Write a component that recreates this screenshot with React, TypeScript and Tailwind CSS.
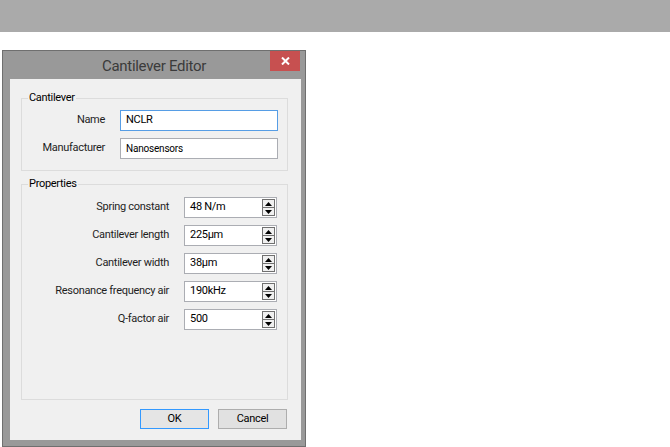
import React from 'react';

const font = "font-['Segoe_UI',Roboto,'Noto_Sans',sans-serif]";
const txt = 'text-[11px] tracking-[-0.3px]';

function GroupBox({ title, className, children }: { title: string; className: string; children: React.ReactNode }) {
  return (
    <div className={`relative border border-[#dcdcdc] ${className}`}>
      <span className={`absolute -top-[8px] left-[6px] bg-[#f0f0f0] px-[1px] leading-[14px] text-[#000] ${txt}`}>
        {title}
      </span>
      {children}
    </div>
  );
}

function Spin({ value }: { value: string }) {
  return (
    <div className={`relative flex h-[21px] w-[93px] items-center border border-[#abadb3] bg-white pl-[5px] text-black ${txt}`}>
      {value}
      <div className="absolute right-[1px] top-[1px] flex flex-col">
        <div className="flex h-[9px] w-[13px] items-center justify-center border border-[#707070] bg-[#f0f0f0]">
          <svg width="7" height="4" viewBox="0 0 7 4"><path d="M0 4 L3.5 0 L7 4 Z" fill="#000" /></svg>
        </div>
        <div className="-mt-[1px] flex h-[9px] w-[13px] items-center justify-center border border-[#707070] bg-[#f0f0f0]">
          <svg width="7" height="4" viewBox="0 0 7 4"><path d="M0 0 L3.5 4 L7 0 Z" fill="#000" /></svg>
        </div>
      </div>
    </div>
  );
}

const props = [
  ['Spring constant', '48 N/m'],
  ['Cantilever length', '225µm'],
  ['Cantilever width', '38µm'],
  ['Resonance frequency air', '190kHz'],
  ['Q-factor air', '500'],
];

export default function App() {
  return (
    <div className={`h-[447px] w-[670px] overflow-hidden bg-white ${font}`}>
      <div className="h-[32px] bg-[#aaaaaa]" />
      <div className="ml-[2px] mt-[18px] flex h-[397px] w-[304px] flex-col border border-[#6f6f6f] bg-[#999999]">
        <div className="relative flex h-[28px] items-center justify-center">
          <span className="pt-[3px] text-[15px] tracking-[-0.3px] text-[#3b3b3b]">Cantilever Editor</span>
          <div className="absolute right-[5px] top-0 flex h-[20px] w-[30px] items-center justify-center bg-[#c75050]">
            <svg width="9" height="8" viewBox="0 0 9 8">
              <path d="M1 0.5 L8 7.5 M8 0.5 L1 7.5" stroke="#fff" strokeWidth="2" />
            </svg>
          </div>
        </div>
        <div className="ml-[7px] flex h-[361px] w-[291px] flex-col bg-[#f0f0f0] pl-[11px] pt-[19px]">
          <GroupBox title="Cantilever" className="h-[73px] w-[267px]">
            <div className="flex flex-col gap-[7px] pt-[11px]">
              <div className="flex items-center">
                <span className={`w-[83px] text-right text-[#1e1e1e] ${txt}`}>Name</span>
                <div className={`ml-[15px] flex h-[21px] w-[158px] items-center border border-[#569de5] bg-white pl-[5px] text-black ${txt}`}>NCLR</div>
              </div>
              <div className="flex items-center">
                <span className={`w-[83px] text-right text-[#1e1e1e] ${txt}`}>Manufacturer</span>
                <div className="ml-[15px] flex h-[21px] w-[158px] items-center border border-[#abadb3] bg-white pl-[5px] text-[10px] tracking-[-0.2px] text-black">Nanosensors</div>
              </div>
            </div>
          </GroupBox>
          <GroupBox title="Properties" className="mt-[13px] h-[216px] w-[267px]">
            <div className="flex flex-col gap-[7px] pt-[12px]">
              {props.map(([label, value]) => (
                <div key={label} className="flex items-center">
                  <span className={`w-[147px] text-right text-[#1e1e1e] ${txt}`}>{label}</span>
                  <div className="ml-[15px]">
                    <Spin value={value} />
                  </div>
                </div>
              ))}
            </div>
          </GroupBox>
          <div className="mt-[9px] flex gap-[9px] pl-[119px]">
            <button className={`flex h-[20px] w-[69px] items-center justify-center border border-[#3399ff] bg-[#e5e5e5] text-black ${txt}`}>OK</button>
            <button className={`flex h-[20px] w-[69px] items-center justify-center border border-[#adadad] bg-[#e1e1e1] text-black ${txt}`}>Cancel</button>
          </div>
        </div>
      </div>
    </div>
  );
}
